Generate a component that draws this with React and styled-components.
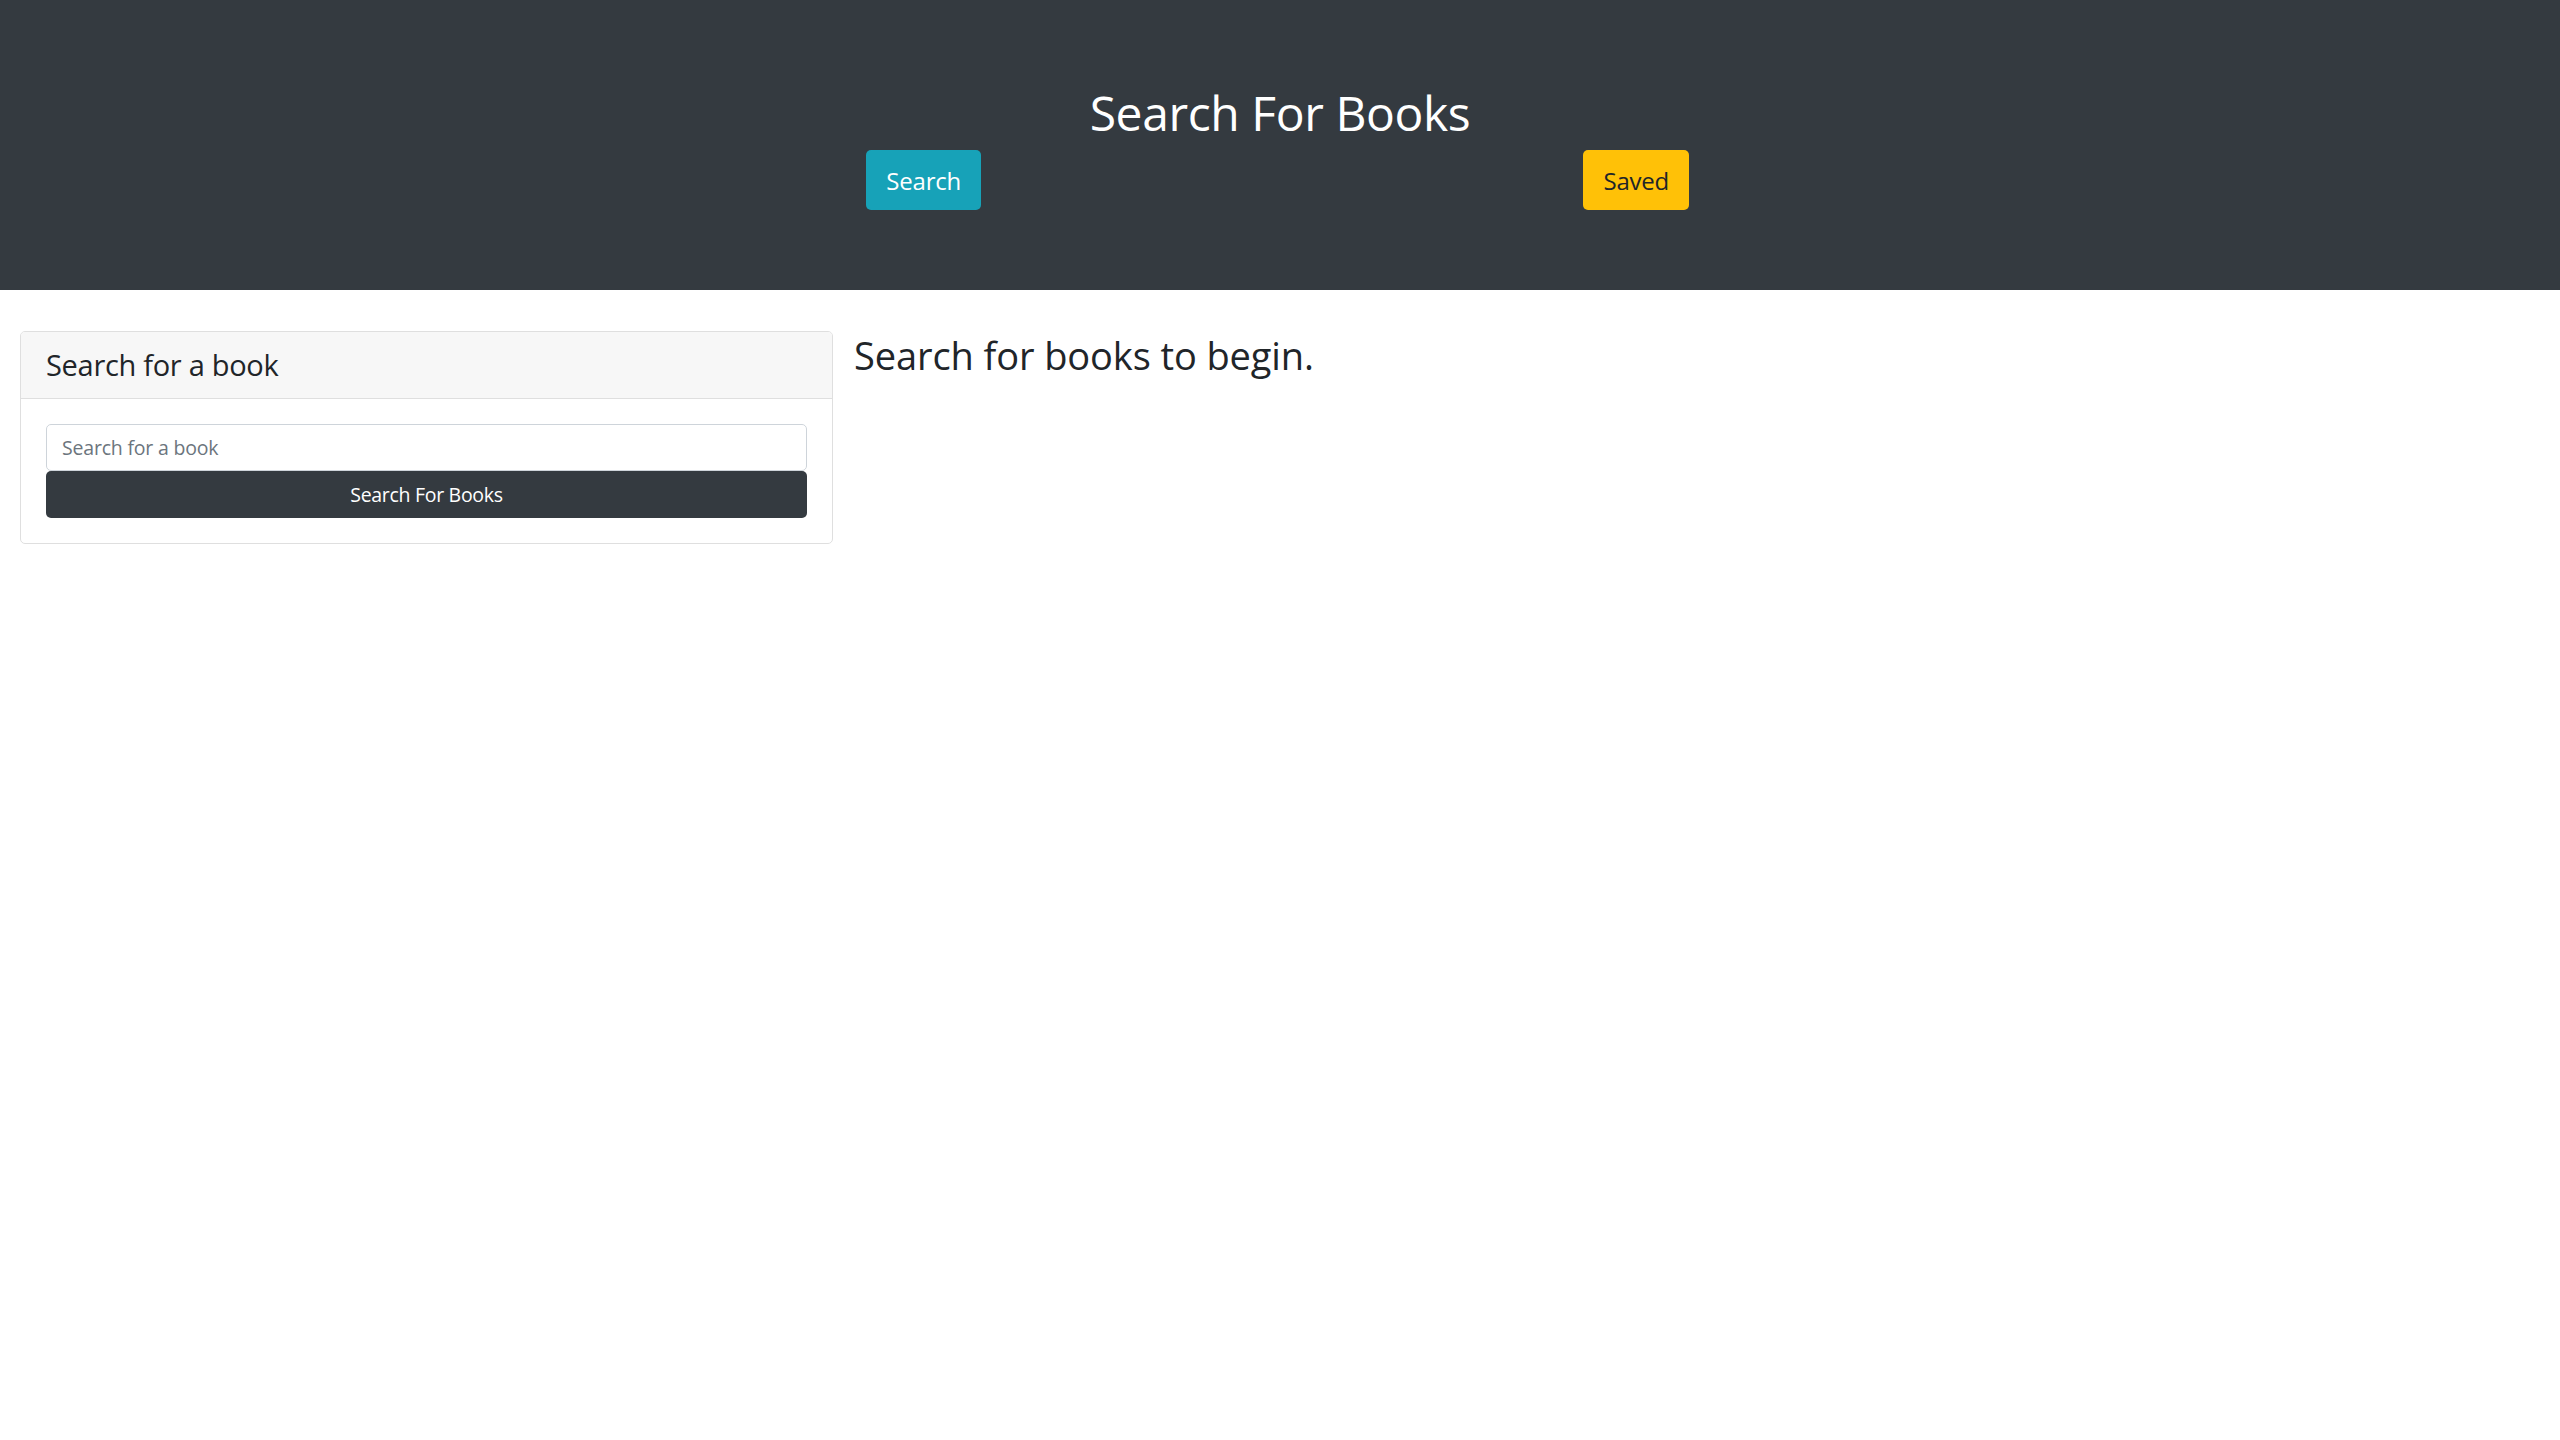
import React from 'react'
import styled, { createGlobalStyle } from 'styled-components'

const GlobalStyle = createGlobalStyle`
  * { box-sizing: border-box; }
  body {
    margin: 0;
    background: #fff;
    color: #212529;
    font-family: "Open Sans", "Noto Sans", Arial, sans-serif;
  }
`

const Header = styled.header`
  background: #343a40;
  padding: 83px 0 80px;
  text-align: center;
`

const Title = styled.h1`
  margin: 0 0 7px;
  color: #fff;
  font-size: 48px;
  font-weight: 400;
  line-height: 60px;
  letter-spacing: -0.4px;
`

const ButtonRow = styled.div`
  width: 1425px;
  margin: 0 auto;
  display: grid;
  grid-template-columns: 1fr 1fr;
  justify-items: center;
`

const NavButton = styled.button`
  height: 60px;
  padding: 0 20px;
  border: none;
  border-radius: 5px;
  font-family: inherit;
  font-size: 24px;
  letter-spacing: -0.2px;
  background: ${(p) => p.bg};
  color: ${(p) => p.fg};
`

const Main = styled.main`
  display: flex;
  align-items: flex-start;
  gap: 21px;
  padding: 41px 20px 0;
`

const Card = styled.section`
  width: 813px;
  border: 1px solid #dfdfdf;
  border-radius: 5px;
  overflow: hidden;
`

const CardHeader = styled.div`
  background: #f7f7f7;
  border-bottom: 1px solid #dfdfdf;
  padding: 15px 25px;
  font-size: 29px;
  line-height: 36px;
  letter-spacing: -0.3px;
`

const CardBody = styled.div`
  padding: 25px;
  display: flex;
  flex-direction: column;
`

const SearchInput = styled.input`
  height: 47px;
  padding: 0 15px;
  border: 1px solid #ced4da;
  border-radius: 5px;
  font-family: inherit;
  font-size: 19.5px;
  color: #495057;
  letter-spacing: -0.2px;
  &::placeholder { color: #6c757d; }
`

const SubmitButton = styled.button`
  height: 47px;
  border: none;
  border-radius: 5px;
  background: #343a40;
  color: #fff;
  font-family: inherit;
  font-size: 19.5px;
  letter-spacing: -0.3px;
`

const Message = styled.h2`
  margin: 0;
  font-size: 38px;
  font-weight: 400;
  line-height: 48px;
  letter-spacing: -0.1px;
`

const App = () => {
  return (
    <>
      <GlobalStyle />
      <Header>
        <Title>Search For Books</Title>
        <ButtonRow>
          <NavButton bg="#17a2b8" fg="#fff">Search</NavButton>
          <NavButton bg="#ffc107" fg="#212529">Saved</NavButton>
        </ButtonRow>
      </Header>

      <Main>
        <Card>
          <CardHeader>Search for a book</CardHeader>
          <CardBody>
            <SearchInput type="text" placeholder="Search for a book" />
            <SubmitButton>Search For Books</SubmitButton>
          </CardBody>
        </Card>
        <Message>Search for books to begin.</Message>
      </Main>
    </>
  )
}

export default App
